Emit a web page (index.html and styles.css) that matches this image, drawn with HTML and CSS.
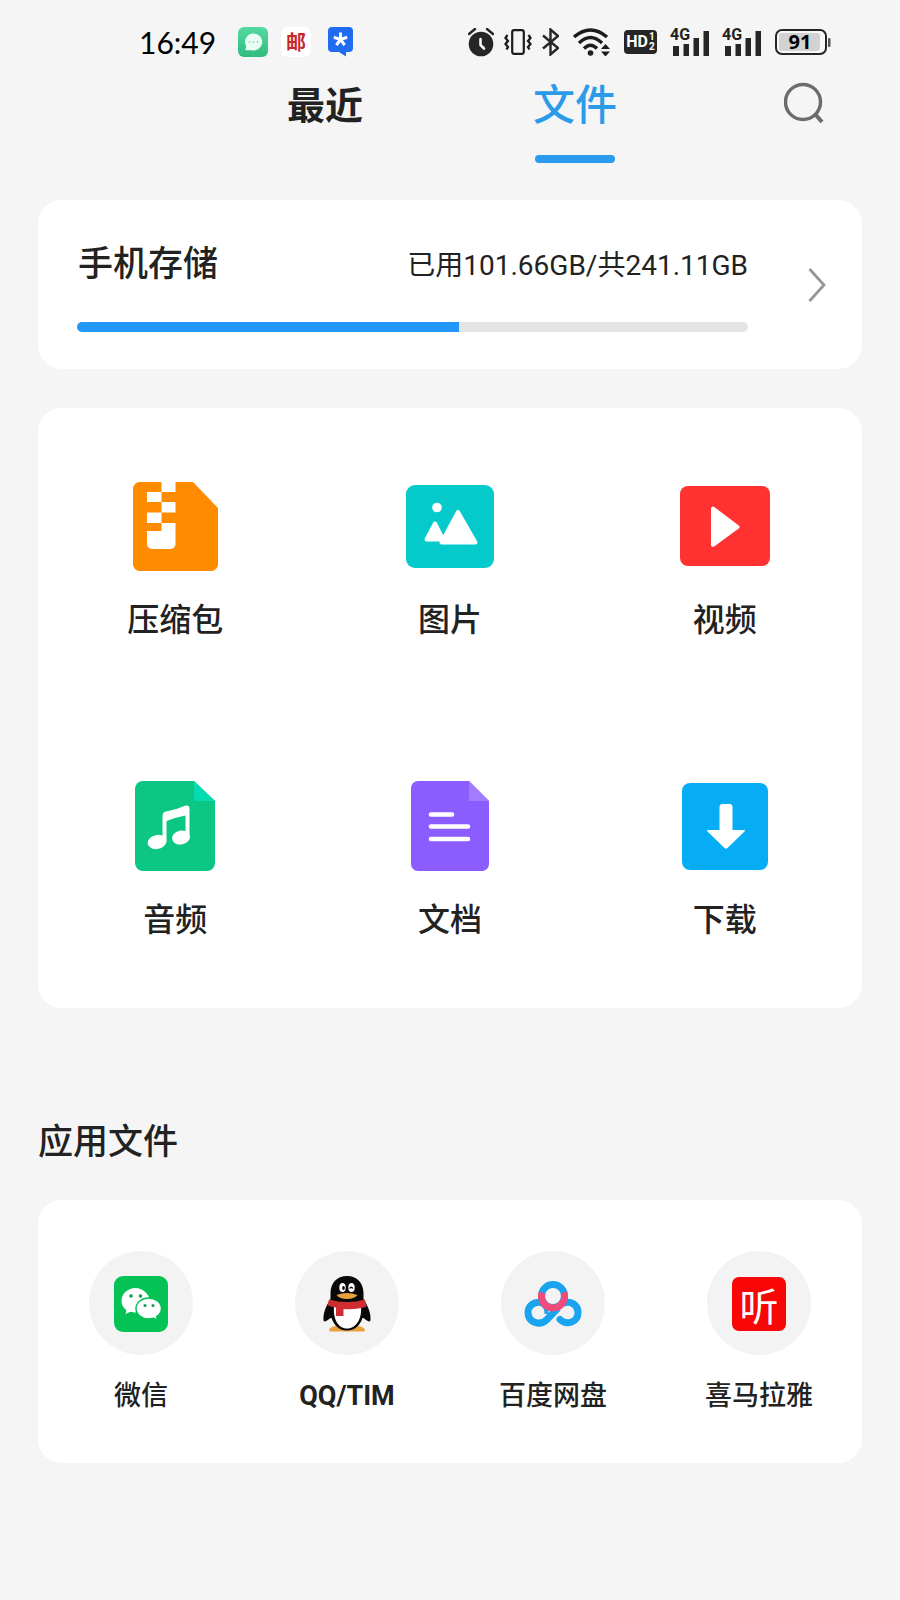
FILE: index.html
```html
<!DOCTYPE html>
<html lang="zh-CN">
<head>
<meta charset="utf-8">
<meta name="viewport" content="width=device-width, initial-scale=1">
<title>文件</title>
<link rel="stylesheet" href="styles.css">
</head>
<body>
<div class="status">
  <div class="status-left">
    <time class="clock">16:49</time>
    <svg class="msg" width="30" height="30" viewBox="0 0 30 30" aria-hidden="true">
      <defs><linearGradient id="mg" x1="0" y1="0" x2="0" y2="1"><stop offset="0" stop-color="#53d9a0"/><stop offset="1" stop-color="#2fbd7d"/></linearGradient></defs>
      <rect width="30" height="30" rx="6" fill="url(#mg)"/>
      <path d="M15.500 6.500a8.500 8.500 0 1 1-2 16.700H8.200c-.7 0-1-.5-.8-1.100l.9-2.700A8.500 8.500 0 0 1 15.500 6.500z" fill="#e9fdf5"/>
      <g fill="#8fe0bd"><circle cx="11.500" cy="15" r="1"/><circle cx="15.500" cy="15" r="1"/><circle cx="19.500" cy="15" r="1"/></g>
    </svg>
    <span class="mail-mark">邮</span>
    <svg class="star" width="25" height="30" viewBox="0 0 25 30" aria-hidden="true">
      <path d="M4 0h17a4 4 0 0 1 4 4v17a4 4 0 0 1-4 4h-3v4.500L11 25H4a4 4 0 0 1-4-4V4a4 4 0 0 1 4-4z" fill="#1f6cf0"/>
      <path d="M12.500 12.500V5.500M12.500 12.500l6.700-2.200M12.500 12.500l4.100 5.700M12.500 12.500l-4.100 5.700M12.500 12.500l-6.700-2.200" stroke="#fff" stroke-width="3" fill="none"/>
    </svg>
  </div>
  <div class="status-right">
    <div class="modes">
      <svg width="26" height="29" viewBox="0 0 26 29" aria-hidden="true">
        <circle cx="13" cy="16" r="12.300" fill="#262626"/>
        <path d="M1 6l6-5M25 6l-6-5" stroke="#262626" stroke-width="2.400" stroke-linecap="round"/>
        <path d="M12.500 11v6l3.500 3.500" stroke="#f5f5f5" stroke-width="2.600" fill="none" stroke-linecap="round" stroke-linejoin="round"/>
      </svg>
      <svg width="28" height="26" viewBox="0 0 28 26" aria-hidden="true" fill="none" stroke="#1c1c1c">
        <rect x="8.200" y="1.200" width="11.600" height="23.600" rx="2" stroke-width="2.200"/>
        <path d="M3.500 6L1.500 9l2.500 3-2.500 3 2.500 3-1.500 2.500M24.500 6l2 3-2.500 3 2.500 3-2.500 3 1.500 2.500" stroke-width="2.300"/>
      </svg>
      <svg width="17" height="28" viewBox="0 0 17 28" aria-hidden="true">
        <path d="M1 7.500L16 20l-7.500 6.500V1.500L16 8 1 20.500" fill="none" stroke="#262626" stroke-width="2.400"/>
      </svg>
    </div>
    <svg width="37" height="28" viewBox="0 0 37 28" aria-hidden="true">
      <g fill="none" stroke="#1c1c1c" stroke-width="3.400"><path d="M1 9Q17.500-5 34 9"/><path d="M6 15Q17.500 4 29 15"/><path d="M11 20.500Q17.500 14 24 20.500"/></g>
      <circle cx="17.500" cy="25" r="2.800" fill="#1c1c1c"/>
      <path d="M28 21l4.500-5 4.500 5zM28 23.500h9l-4.500 5z" fill="#1c1c1c"/>
    </svg>
    <div class="hd"><span>HD</span><span class="hd-nums"><span>1</span><span>2</span></span></div>
    <div class="net"><span class="net-name">4G</span>
      <svg width="38" height="28" viewBox="0 0 38 28" aria-hidden="true"><path d="M2 18h6v10H2zM12.500 16h5.500v12h-5.500zM22.500 10h5.500v18h-5.500zM32.500 3H38v25h-5.500z" fill="#262626"/></svg>
    </div>
    <div class="net"><span class="net-name">4G</span>
      <svg width="38" height="28" viewBox="0 0 38 28" aria-hidden="true"><path d="M2 18h6v10H2zM12.500 16h5.500v12h-5.500zM22.500 10h5.500v18h-5.500zM32.500 3H38v25h-5.500z" fill="#262626"/></svg>
    </div>
    <svg width="56" height="26" viewBox="0 0 56 26" aria-hidden="true">
      <rect x="1" y="1" width="50" height="24" rx="6" fill="#f7f7f7" stroke="#262626" stroke-width="2"/>
      <rect x="4" y="4" width="41" height="18" rx="3" fill="#d2d2d2"/>
      <rect x="53" y="9" width="2.500" height="9" rx="1" fill="#555"/>
      <text class="level" x="25" y="20" text-anchor="middle">91</text>
    </svg>
  </div>
</div>

<header class="header">
  <nav class="tabs">
    <button class="tab" type="button">最近</button>
    <button class="tab tab-active" type="button" aria-current="page">文件</button>
  </nav>
  <button class="search" type="button" aria-label="搜索">
    <svg width="40" height="41" viewBox="0 0 40 41" fill="none" stroke="#6c6c6c" stroke-width="3.500">
      <circle cx="19" cy="20" r="17.500"/><path d="M31 32l7 8" stroke-width="4"/>
    </svg>
  </button>
</header>

<main class="main">
  <a class="card storage" href="#storage">
    <div class="storage-body">
      <div class="storage-head">
        <h2 class="title">手机存储</h2>
        <span class="usage">已用101.66GB/共241.11GB</span>
      </div>
      <div class="bar"><div class="bar-fill" style="width:57%"></div></div>
    </div>
    <svg class="chevron" width="18" height="34" viewBox="0 0 18 34" fill="none" aria-hidden="true"><path d="M1.500 1L16 17 1.500 33" stroke="#969696" stroke-width="2.800"/></svg>
  </a>

  <section class="card types">
    <a class="type" href="#zip">
      <span class="type-icon"><svg width="85" height="89" viewBox="0 0 85 89" aria-hidden="true">
        <path d="M6 0h54l25 26v57q-1 5-6 6H6q-5-1-6-6V6q1-5 6-6z" fill="#ff8c00"/>
        <path d="M28.500 0h14v10h-14v10H14V10h14.500zM28.500 20h14v10.500h-14V41H14V30.500h14.500zM28.500 41h14v21a5 5 0 0 1-5 5H19a5 5 0 0 1-5-5V49h14.500z" fill="#fff"/>
      </svg></span>
      <span class="type-name">压缩包</span>
    </a>
    <a class="type" href="#images">
      <span class="type-icon"><svg width="88" height="83" viewBox="0 0 88 83" aria-hidden="true">
        <rect width="88" height="83" rx="9" fill="#04cacc"/>
        <circle cx="31" cy="22.500" r="4.800" fill="#fff"/>
        <path d="M52 27L69.500 57.500H35.500zM29 38.500L37 54.500H20.500z" fill="#fff" stroke="#fff" stroke-width="4" stroke-linejoin="round"/>
      </svg></span>
      <span class="type-name">图片</span>
    </a>
    <a class="type" href="#video">
      <span class="type-icon"><svg width="90" height="80" viewBox="0 0 90 80" aria-hidden="true">
        <rect width="90" height="80" rx="8" fill="#ff3131"/>
        <path d="M33 22.500v36.500L57.500 41z" fill="#fff" stroke="#fff" stroke-width="4" stroke-linejoin="round"/>
      </svg></span>
      <span class="type-name">视频</span>
    </a>
    <a class="type" href="#audio">
      <span class="type-icon"><svg width="80" height="90" viewBox="0 0 80 90" aria-hidden="true">
        <path d="M8 0h51l21 20v62a8 8 0 0 1-8 8H8a8 8 0 0 1-8-8V8a8 8 0 0 1 8-8z" fill="#0cc683"/>
        <path d="M59 0l21 20H59z" fill="#02dcb0"/>
        <path d="M27.500 61V35Q27.500 31 31 30.500Q41 29 50 24.800Q54.500 23.500 54.500 28V57H50.500V34.500Q42 36 31.500 40V61z" fill="#fff"/>
        <ellipse cx="22" cy="61" rx="9.500" ry="7" fill="#fff" transform="rotate(-12 22 61)"/>
        <ellipse cx="46" cy="56.500" rx="9" ry="7" fill="#fff" transform="rotate(-12 46 56.500)"/>
      </svg></span>
      <span class="type-name">音频</span>
    </a>
    <a class="type" href="#docs">
      <span class="type-icon"><svg width="78" height="90" viewBox="0 0 78 90" aria-hidden="true">
        <path d="M7 0h51l20 20v63a7 7 0 0 1-7 7H7a7 7 0 0 1-7-7V7a7 7 0 0 1 7-7z" fill="#8b5cff"/>
        <path d="M58 0l20 20H58z" fill="#a17cff"/>
        <path d="M20 33.500h21M20 45.500h37M20 58h37" stroke="#fff" stroke-width="4.600" stroke-linecap="round"/>
      </svg></span>
      <span class="type-name">文档</span>
    </a>
    <a class="type" href="#downloads">
      <span class="type-icon"><svg width="86" height="87" viewBox="0 0 86 87" aria-hidden="true">
        <rect width="86" height="87" rx="8" fill="#06adf4"/>
        <path d="M40.500 21h7a3 3 0 0 1 3 3v23H62q2 0 .5 1.500L45.500 65q-1.500 1.500-3 0L25.500 48.500Q24 47 26 47h11.500V24a3 3 0 0 1 3-3z" fill="#fff"/>
      </svg></span>
      <span class="type-name">下载</span>
    </a>
  </section>

  <h2 class="title section-title">应用文件</h2>

  <section class="card apps">
    <a class="app" href="#wechat">
      <span class="app-icon"><svg width="54" height="56" viewBox="0 0 54 56" aria-hidden="true">
        <rect width="54" height="56" rx="9" fill="#04c254"/>
        <path d="M21.500 12C14 12 7.500 17.500 7.500 25c0 4 2 7 5 9.200L11.500 38l5-2.200c2 .6 4.500.8 7 .6C30 36 36 31 36 25S29 12 21.500 12z" fill="#fff"/>
        <path d="M34.500 22C28 22 22 26.500 22 32.500S28 43 34.500 43c1.800 0 3.500-.3 5-.8l4 2-.8-3.500c3-2 4.800-4.800 4.800-8.200C47.500 26.500 41.500 22 34.500 22z" fill="#fff" stroke="#04c254" stroke-width="1.500"/>
        <g fill="#04a348"><circle cx="17" cy="20" r="1.800"/><circle cx="26.500" cy="20" r="1.800"/><circle cx="31" cy="29.500" r="1.500"/><circle cx="39" cy="29.500" r="1.500"/></g>
      </svg></span>
      <span class="app-name">微信</span>
    </a>
    <a class="app" href="#qq">
      <span class="app-icon"><svg width="48" height="56" viewBox="0 0 48 56" aria-hidden="true">
        <path d="M6 54q2-4 8-4h20q6 0 8 4 0 1.500-2 1.500H8Q6 55.500 6 54z" fill="#e9a23b"/>
        <path d="M24 0C14 0 7.500 7 7.500 17v6C3 30 0 37 .5 44c.3 2 2 1.500 3.500.5 2-1.200 3-3 4.500-2.500C11 50 17 54.500 24 54.500S37 50 39.500 42c1.500-.5 2.500 1.300 4.500 2.500 1.500 1 3.200 1.500 3.500-.5.500-7-2.500-14-7-21v-6C40.500 7 34 0 24 0z" fill="#080808"/>
        <path d="M11 31h27c1 11-4.500 21.500-14 21.500S10 42 11 31z" fill="#fff"/>
        <path d="M6 23.500q18 5 36 0l1.500 7Q34 34 20.500 33v7H13v-8.500q-4-.5-8.500-2z" fill="#cf2d31"/>
        <ellipse cx="19.500" cy="11.500" rx="3.200" ry="4.500" fill="#fff"/><ellipse cx="28.500" cy="11.500" rx="3.200" ry="4.500" fill="#fff"/>
        <ellipse cx="20.500" cy="12" rx="1.300" ry="2" fill="#080808"/><path d="M26.800 12.500q1.500-2.500 3 0" fill="none" stroke="#080808" stroke-width="1.300"/>
        <path d="M13.500 19Q24 15 34.500 19q-3 4-10.500 4t-10.500-4z" fill="#e9a23b"/>
      </svg></span>
      <span class="app-name app-name-latin">QQ/TIM</span>
    </a>
    <a class="app" href="#netdisk">
      <span class="app-icon"><svg width="58" height="48" viewBox="0 0 58 48" aria-hidden="true" fill="none" stroke-width="7">
        <path d="M40 23C47 20.500 54 25 54 32.500C54 42 43 46 36 39.500" stroke="#18a4ee" stroke-linecap="round"/>
        <path d="M17 22.500C10 21 4 26 4 32.500C4 42.500 16 46.500 23 39.500L34 28" stroke="#18a4ee"/>
        <path d="M16 23.500Q23 26 22.500 34" stroke="#18a4ee" stroke-width="4"/>
        <circle cx="29" cy="16" r="11.500" stroke="#18a4ee"/>
        <path d="M18.200 12.500a11.500 11.500 0 1 0 21.600 0" stroke="#ef4c7d"/>
      </svg></span>
      <span class="app-name">百度网盘</span>
    </a>
    <a class="app" href="#ximalaya">
      <span class="app-icon"><span class="ting">听</span></span>
      <span class="app-name">喜马拉雅</span>
    </a>
  </section>
</main>
</body>
</html>
```
FILE: styles.css
```css
* { box-sizing: border-box; }

body {
  margin: 0;
  min-height: 100vh;
  background: #f5f5f5;
  color: #222;
  font-family: Roboto, "Noto Sans CJK SC", sans-serif;
}

a { color: inherit; text-decoration: none; }
svg { display: block; flex: none; }

button {
  padding: 0;
  border: 0;
  background: none;
  color: inherit;
  font-family: inherit;
  cursor: pointer;
}

.status {
  display: flex;
  justify-content: space-between;
  align-items: center;
  height: 84px;
  padding: 0 69px 0 139px;
}

.status-left { display: flex; align-items: center; gap: 13px; }
.status-right { display: flex; align-items: center; gap: 14px; }
.modes { display: flex; align-items: center; gap: 10px; }
.clock { margin-right: 9px; color: #000; font: 30px/36px Lato, sans-serif; }
.star { margin-left: 4px; }

.mail-mark {
  width: 30px;
  border-radius: 6px;
  background: #fff;
  color: #c8282d;
  font: bold 20px/30px "Noto Sans CJK SC", sans-serif;
  text-align: center;
}

.hd {
  display: flex;
  align-items: center;
  justify-content: center;
  gap: 1px;
  width: 33px;
  height: 24px;
  border-radius: 4px;
  background: #262626;
  color: #fff;
  font-size: 16px;
  font-weight: bold;
  line-height: 24px;
}

.hd-nums { display: grid; font-size: 10px; line-height: 10px; }

.net { position: relative; }
.net-name {
  position: absolute;
  top: -3px;
  left: -1px;
  font-size: 16px;
  font-weight: bold;
  line-height: 20px;
}

.level { fill: #000; font: bold 20px "Open Sans", sans-serif; }

.header {
  display: grid;
  grid-template-columns: 4fr 10fr 4fr;
  align-items: start;
  margin-top: -2px;
}

.tabs { display: grid; grid-template-columns: 1fr 1fr; grid-column: 2; }

.tab {
  display: flex;
  flex-direction: column;
  align-items: center;
  gap: 25px;
  font-size: 38px;
  font-weight: 700;
  line-height: 48px;
}

.tab-active { color: #2b9be9; font-size: 42px; font-weight: 500; }

.tab-active::after {
  content: "";
  width: 80px;
  height: 8px;
  border-radius: 4px;
  background: #2b9bef;
}

.search { justify-self: end; margin-right: 76px; }

.main { padding: 37px 38px; }
.card { border-radius: 24px; background: #fff; }

.title { margin: 0; font-size: 35px; font-weight: 500; line-height: 48px; }

.storage {
  display: flex;
  align-items: center;
  gap: 60px;
  padding: 41px 36px 37px 39px;
}

.storage-body { flex: 1; }
.storage-head { display: flex; justify-content: space-between; align-items: center; padding-left: 1px; }
.usage { padding-top: 2px; font-size: 28px; line-height: 36px; }
.chevron { margin-bottom: 4px; }

.bar {
  height: 10px;
  margin-top: 33px;
  overflow: hidden;
  border-radius: 5px;
  background: #e4e4e4;
}

.bar-fill { height: 100%; background: #2398fb; }

.types {
  display: grid;
  grid-template-columns: repeat(3, 1fr);
  margin-top: 39px;
}

.type {
  display: flex;
  flex-direction: column;
  align-items: center;
  gap: 26px;
  padding: 72px 0 66px;
}

.type-icon { display: flex; align-items: center; height: 92px; }
.type-name { font-size: 32px; font-weight: 500; line-height: 44px; }

.section-title { margin: 111px 0 33px; }

.apps { display: grid; grid-template-columns: repeat(4, 1fr); padding: 51px 0 48px; }

.app { display: flex; flex-direction: column; align-items: center; gap: 22px; }

.app-icon {
  display: flex;
  align-items: center;
  justify-content: center;
  width: 104px;
  height: 104px;
  padding-top: 2px;
  border-radius: 50%;
  background: #f3f3f3;
}

.app-name { font-size: 27px; font-weight: 500; line-height: 38px; }
.app-name-latin { font-weight: 700; }

.ting {
  width: 54px;
  border-radius: 7px;
  background: #f90606;
  color: #fff;
  font: 39px/54px "Noto Sans CJK SC", sans-serif;
  text-align: center;
}
```
